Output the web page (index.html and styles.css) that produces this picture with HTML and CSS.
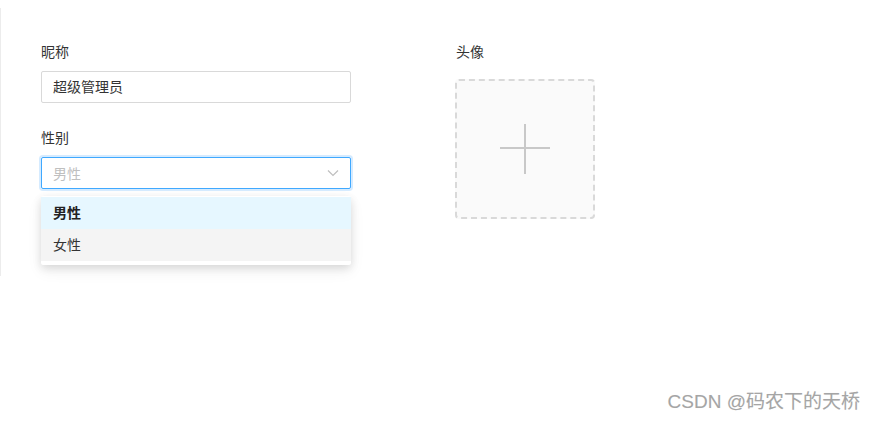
FILE: index.html
```html
<!DOCTYPE html>
<html lang="zh-CN">
<head>
<meta charset="utf-8">
<title>个人信息</title>
<link rel="stylesheet" href="styles.css">
</head>
<body>
<div class="panel">
  <div class="col col-left">
    <div class="field">
      <div class="label">昵称</div>
      <div class="input">超级管理员</div>
    </div>
    <div class="field field-select">
      <div class="label">性别</div>
      <div class="select">
        <span class="placeholder">男性</span>
        <svg class="arrow" width="12" height="8" viewBox="0 0 12 8"><path d="M1 1.5 L6 6.5 L11 1.5" fill="none" stroke="#bfbfbf" stroke-width="1.2"/></svg>
      </div>
      <div class="dropdown">
        <div class="option selected">男性</div>
        <div class="option hover">女性</div>
      </div>
    </div>
  </div>
  <div class="col col-right">
    <div class="label">头像</div>
    <div class="upload">
      <svg width="52" height="52" viewBox="0 0 52 52"><path d="M26 1 V51 M1 25 H51" stroke="#c8c8c8" stroke-width="2" fill="none"/></svg>
    </div>
  </div>
</div>
<div class="watermark">CSDN @码农下的天桥</div>
</body>
</html>
```
FILE: styles.css
```css
html, body {
  margin: 0;
  padding: 0;
  background: #fff;
  font-family: "Noto Sans CJK SC", "Noto Sans", sans-serif;
  color: #333;
}
body {
  width: 876px;
  height: 421px;
  position: relative;
  overflow: hidden;
}
.panel {
  margin-top: 8px;
  height: 268px;
  border-left: 1px solid #ececec;
  box-sizing: border-box;
  padding: 32px 0 0 40px;
  display: flex;
  gap: 104px;
}
.label {
  font-size: 14px;
  line-height: 22px;
  height: 22px;
  color: #333;
}
.col-left {
  width: 310px;
  display: flex;
  flex-direction: column;
  gap: 23px;
}
.field {
  display: flex;
  flex-direction: column;
  gap: 9px;
}
.field-select {
  position: relative;
}
.input, .select {
  height: 32px;
  box-sizing: border-box;
  border: 1px solid #d9d9d9;
  border-radius: 2px;
  padding: 0 11px;
  font-size: 14px;
  line-height: 29px;
  color: #333;
}
.select {
  border-color: #40a9ff;
  box-shadow: 0 0 0 2px rgba(24, 144, 255, 0.18);
  display: flex;
  align-items: center;
  justify-content: space-between;
}
.placeholder {
  color: #bfbfbf;
  line-height: 29px;
}
.arrow {
  margin-right: 0;
}
.dropdown {
  position: absolute;
  top: 70px;
  left: 0;
  width: 310px;
  background: #fff;
  padding: 1px 0 4px;
  border-radius: 2px;
  box-shadow: 0 3px 8px rgba(0, 0, 0, 0.12), 0 6px 16px rgba(0, 0, 0, 0.06);
}
.option {
  height: 32px;
  line-height: 31px;
  padding: 0 12px;
  font-size: 14px;
  color: #333;
}
.option.selected {
  background: #e6f7ff;
  font-weight: 700;
  color: #222;
}
.option.hover {
  background: #f4f4f4;
}
.col-right {
  display: flex;
  flex-direction: column;
  gap: 17px;
}
.col-right .label {
  padding-left: 1px;
}
.upload {
  width: 140px;
  height: 140px;
  box-sizing: border-box;
  border: 2px dashed #d9d9d9;
  border-radius: 4px;
  background: #fafafa;
  display: flex;
  align-items: center;
  justify-content: center;
}
.watermark {
  position: absolute;
  right: 16px;
  top: 390px;
  font-family: "Liberation Sans", "Noto Sans CJK SC", sans-serif;
  font-size: 19px;
  line-height: 24px;
  color: #a5a5a5;
  text-shadow: 0 0 1px rgba(0,0,0,0.08);
}
```
